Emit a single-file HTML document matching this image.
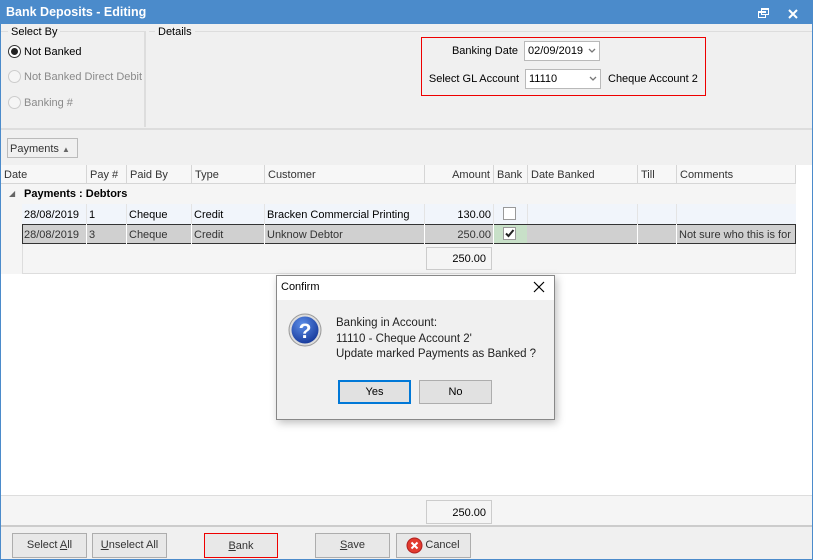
<!DOCTYPE html>
<html><head><meta charset="utf-8"><style>
*{box-sizing:border-box;margin:0;padding:0}
body{width:813px;height:560px;overflow:hidden;background:#f0f0f0;font-family:"Liberation Sans",Tahoma,sans-serif;font-size:11px;color:#000;position:relative}
.a{position:absolute}
.t{white-space:nowrap}
.hdr{position:absolute;top:165px;height:19px;border-right:1px solid #d6d6d6;padding:4px 3px;color:#333;background:#f7f7f7;border-bottom:1px solid #d6d6d6;white-space:nowrap}
.cell{position:absolute;height:20px;padding:5px 2px;border-right:1px solid #e4e4e4;white-space:nowrap;overflow:hidden}
.btn{position:absolute;height:25px;border:1px solid #adadad;background:#e8e8e8;text-align:center;line-height:23px;color:#333}
.in{position:absolute;border:1px solid #b9b9b9;background:#fff;height:20px;padding:3px 3px}
</style></head><body>
<div class="a" style="left:0;top:0;width:813px;height:560px;border:1px solid #4b8bcb;border-top:none"></div>
<div class="a" style="left:0;top:0;width:813px;height:24px;background:#4b8bcb;color:#fff;font-weight:bold;font-size:12.5px;padding:5px 6px">Bank Deposits - Editing</div>
<svg class="a" style="left:758px;top:8px" width="12" height="11"><rect x="0.5" y="3.5" width="7" height="6" fill="none" stroke="#fff"/><rect x="3.5" y="0.5" width="7" height="6" fill="#4b8bcb" stroke="#fff"/><rect x="0" y="3" width="8" height="2" fill="#fff"/><rect x="3" y="0" width="8" height="2" fill="#fff"/></svg>
<svg class="a" style="left:788px;top:9px" width="10" height="10"><path d="M1 1L9 9M9 1L1 9" stroke="#fff" stroke-width="2"/></svg>
<div class="a" style="left:1px;top:31px;width:145px;height:96px;border-top:1px solid #ddd;border-right:2px solid #ddd"></div>
<div class="a t" style="left:8px;top:26px;background:#f0f0f0;padding:0 3px">Select By</div>
<div class="a" style="left:149px;top:31px;width:663px;height:96px;border-top:1px solid #ddd"></div>
<div class="a t" style="left:155px;top:26px;background:#f0f0f0;padding:0 3px">Details</div>
<div class="a" style="left:8px;top:45px;width:13px;height:13px;border:1px solid #333;border-radius:50%;background:#fff"><div style="margin:2px;width:7px;height:7px;border-radius:50%;background:#222"></div></div>
<div class="a t" style="left:24px;top:46px">Not Banked</div>
<div class="a" style="left:8px;top:70px;width:13px;height:13px;border:1px solid #ccc;border-radius:50%;background:#f5f5f5"></div>
<div class="a t" style="left:24px;top:71px;color:#8a8a8a">Not Banked Direct Debit</div>
<div class="a" style="left:8px;top:96px;width:13px;height:13px;border:1px solid #ccc;border-radius:50%;background:#f5f5f5"></div>
<div class="a t" style="left:24px;top:97px;color:#8a8a8a">Banking #</div>
<div class="a" style="left:421px;top:37px;width:285px;height:59px;border:1px solid #e00"></div>
<div class="a t" style="left:420px;top:45px;width:98px;text-align:right">Banking Date</div>
<div class="in t" style="left:524px;top:41px;width:76px">02/09/2019</div>
<svg class="a" style="left:588px;top:48px" width="8" height="6"><path d="M1 1L4 4L7 1" stroke="#777" stroke-width="1.3" fill="none"/></svg>
<div class="a t" style="left:420px;top:73px;width:99px;text-align:right">Select GL Account</div>
<div class="in t" style="left:525px;top:69px;width:76px">11110</div>
<svg class="a" style="left:589px;top:76px" width="8" height="6"><path d="M1 1L4 4L7 1" stroke="#777" stroke-width="1.3" fill="none"/></svg>
<div class="a t" style="left:608px;top:73px">Cheque Account 2</div>
<div class="a" style="left:1px;top:128px;width:811px;height:2px;background:#ddd"></div>
<div class="a t" style="left:7px;top:138px;width:71px;height:20px;border:1px solid #bbb;padding:4px 2px;color:#333">Payments <span style="font-size:8px;color:#666">&#9650;</span></div>
<div class="a" style="left:1px;top:165px;width:795px;height:109px;background:#f5f5f5"></div>
<div class="a" style="left:796px;top:165px;width:16px;height:330px;background:#fff"></div>
<div class="a" style="left:1px;top:274px;width:795px;height:221px;background:#fff"></div>
<div class="hdr" style="left:1px;width:86px">Date</div>
<div class="hdr" style="left:87px;width:40px">Pay #</div>
<div class="hdr" style="left:127px;width:65px">Paid By</div>
<div class="hdr" style="left:192px;width:73px">Type</div>
<div class="hdr" style="left:265px;width:160px">Customer</div>
<div class="hdr" style="left:425px;width:69px;text-align:right">Amount</div>
<div class="hdr" style="left:494px;width:34px">Bank</div>
<div class="hdr" style="left:528px;width:110px">Date Banked</div>
<div class="hdr" style="left:638px;width:39px">Till</div>
<div class="hdr" style="left:677px;width:119px">Comments</div>
<div class="a t" style="left:9px;top:189px;font-size:8px;color:#666">&#9698;</div>
<div class="a t" style="left:24px;top:188px;font-weight:bold">Payments : Debtors</div>
<div class="a" style="left:22px;top:204px;width:774px;height:20px;background:#f1f5fb"></div>
<div class="cell" style="left:22px;top:204px;width:65px">28/08/2019</div>
<div class="cell" style="left:87px;top:204px;width:40px">1</div>
<div class="cell" style="left:127px;top:204px;width:65px">Cheque</div>
<div class="cell" style="left:192px;top:204px;width:73px">Credit</div>
<div class="cell" style="left:265px;top:204px;width:160px">Bracken Commercial Printing</div>
<div class="cell" style="left:425px;top:204px;width:69px;text-align:right">130.00</div>
<div class="a" style="left:503px;top:207px;width:13px;height:13px;border:1px solid #999;background:#fff"></div>
<div class="cell" style="left:494px;top:204px;width:34px;background:transparent"></div>
<div class="cell" style="left:528px;top:204px;width:110px"></div>
<div class="cell" style="left:638px;top:204px;width:39px"></div>
<div class="a" style="left:22px;top:224px;width:774px;height:20px;background:#d0d0d0;border:1px solid #333"></div>
<div class="cell" style="left:22px;top:224px;width:65px;border-color:#fff;color:#333">28/08/2019</div>
<div class="cell" style="left:87px;top:224px;width:40px;border-color:#fff;color:#333">3</div>
<div class="cell" style="left:127px;top:224px;width:65px;border-color:#fff;color:#333">Cheque</div>
<div class="cell" style="left:192px;top:224px;width:73px;border-color:#fff;color:#333">Credit</div>
<div class="cell" style="left:265px;top:224px;width:160px;border-color:#fff;color:#333">Unknow Debtor</div>
<div class="cell" style="left:425px;top:224px;width:69px;border-color:#fff;text-align:right;color:#333">250.00</div>
<div class="a" style="left:494px;top:225px;width:33px;height:18px;background:#c8e0c8"></div>
<div class="a" style="left:503px;top:227px;width:13px;height:13px;border:1px solid #999;background:#fff"><svg width="11" height="11" style="display:block"><path d="M2 5.5L4.5 8L9.5 2" stroke="#222" stroke-width="2" fill="none"/></svg></div>
<div class="cell" style="left:528px;top:224px;width:110px;border-color:#fff"></div>
<div class="cell" style="left:638px;top:224px;width:39px;border-color:#fff"></div>
<div class="cell" style="left:677px;top:224px;width:118px;border:none;color:#333">Not sure who this is for</div>
<div class="a" style="left:22px;top:244px;width:774px;height:30px;border:1px solid #ddd;border-top:none"></div>
<div class="a" style="left:426px;top:247px;width:66px;height:23px;border:1px solid #ccc;text-align:right;padding:5px 5px">250.00</div>
<div class="a" style="left:1px;top:495px;width:811px;height:32px;background:#f5f5f5;border-top:1px solid #ddd;border-bottom:2px solid #ccc"></div>
<div class="a" style="left:426px;top:500px;width:66px;height:24px;border:1px solid #ccc;text-align:right;padding:6px 5px">250.00</div>
<div class="btn" style="left:12px;top:533px;width:75px">Select <u>A</u>ll</div>
<div class="btn" style="left:92px;top:533px;width:75px"><u>U</u>nselect All</div>
<div class="btn" style="left:204px;top:533px;width:74px;border-color:#e00;line-height:25px"><u>B</u>ank</div>
<div class="btn" style="left:315px;top:533px;width:75px"><u>S</u>ave</div>
<div class="btn" style="left:396px;top:533px;width:75px;padding-left:18px">Cancel</div>
<svg class="a" style="left:406px;top:537px" width="17" height="17"><circle cx="8.5" cy="8.5" r="7.5" fill="#e23b2e" stroke="#b02020"/><path d="M5.5 5.5L11.5 11.5M11.5 5.5L5.5 11.5" stroke="#fff" stroke-width="2"/></svg>
<div class="a" style="left:276px;top:275px;width:279px;height:145px;background:#f0f0f0;border:1px solid #888;box-shadow:2px 3px 8px rgba(0,0,0,.25)"></div>
<div class="a" style="left:277px;top:276px;width:277px;height:24px;background:#fff"></div>
<div class="a t" style="left:281px;top:281px">Confirm</div>
<svg class="a" style="left:533px;top:281px" width="12" height="12"><path d="M1 1L11 11M11 1L1 11" stroke="#000" stroke-width="1.2"/></svg>
<svg class="a" style="left:288px;top:313px" width="34" height="34"><defs><radialGradient id="g" cx="40%" cy="30%" r="70%"><stop offset="0" stop-color="#5c8ee8"/><stop offset="1" stop-color="#1a3d9e"/></radialGradient></defs><circle cx="17" cy="17" r="16" fill="#ddd" stroke="#999"/><circle cx="17" cy="17" r="13.5" fill="url(#g)"/><text x="17" y="25" font-family="Liberation Sans" font-weight="bold" font-size="21" fill="#fff" text-anchor="middle">?</text></svg>
<div class="a t" style="left:336px;top:316px;line-height:15.5px;color:#222;font-size:11.5px">Banking in Account:<br>11110 - Cheque Account 2'<br>Update marked Payments as Banked ?</div>
<div class="a" style="left:338px;top:380px;width:73px;height:24px;border:2px solid #0078d7;background:#e1e1e1;text-align:center;line-height:20px">Yes</div>
<div class="a" style="left:419px;top:380px;width:73px;height:24px;border:1px solid #adadad;background:#e1e1e1;text-align:center;line-height:22px">No</div>
</body></html>
